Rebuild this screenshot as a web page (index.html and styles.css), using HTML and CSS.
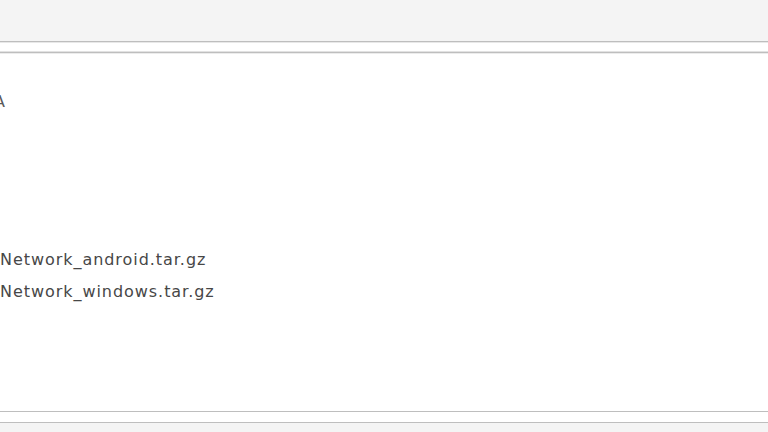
FILE: index.html
```html
<!DOCTYPE html>
<html lang="en">
  <head>
    <meta charset="UTF-8" />
    <title>Downloads</title>
    <link rel="stylesheet" href="styles.css">
  </head>
  <body>
    <div class="frame">
      <div class="panel">
        <h2 class="panel-title">A</h2>
        <ul class="file-list">
          <li>Network_android.tar.gz</li>
          <li>Network_windows.tar.gz</li>
        </ul>
      </div>
    </div>
  </body>
</html>
```

FILE: styles.css
```css
html {
  font-size: 16px;
}
body {
  margin: 0;
  background-color: #f4f4f4;
  font-family: "DejaVu Sans", Verdana, sans-serif;
  color: #4a4a4a;
  overflow: hidden;
}
.frame {
  margin: 41px -20px 0;
  padding: 10px 0;
  background-color: #fff;
  border-top: 1px solid #bebebe;
  border-bottom: 1px solid #bebebe;
  box-shadow: 0 1px 0 #e2e2e2, inset 0 1px 0 #e8e8e8;
}
.panel {
  height: 358px;
  border-top: 1px solid #bebebe;
  border-bottom: 1px solid #bebebe;
  box-shadow: 0 -1px 0 #e2e2e2, inset 0 1px 0 #ececec;
  padding-left: 20px;
  overflow: hidden;
}
.panel-title {
  margin: 39px 0 0 -6px;
  font-size: 16px;
  font-weight: normal;
  line-height: 20px;
  color: #5a5a5a;
}
.file-list {
  list-style: none;
  margin: 132px 0 0;
  padding: 0;
  font-size: 16px;
  line-height: 32px;
  letter-spacing: 0.95px;
  color: #474747;
}
```
